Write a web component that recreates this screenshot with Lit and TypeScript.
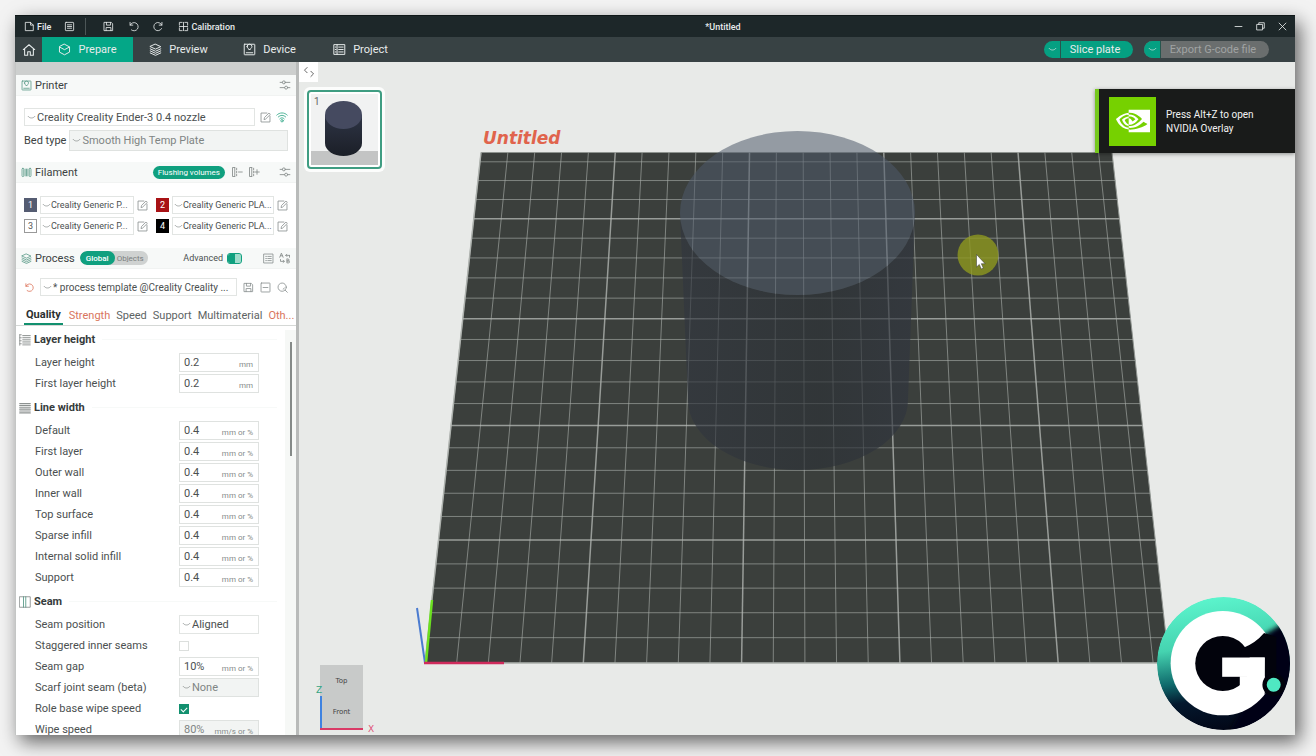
import { LitElement, html, css, svg, nothing } from "lit";
import { customElement } from "lit/decorators.js";
import { classMap } from "lit/directives/class-map.js";

const stroke = (size: number, body: unknown, box = 16) => html`<svg
  class="ico" width=${size} height=${size} viewBox="0 0 ${box} ${box}"
  fill="none" stroke="currentColor" stroke-width="1.2" stroke-linecap="round" stroke-linejoin="round" aria-hidden="true">${body}</svg>`;

const icons = {
  file: svg`<path d="M2.5 2h7l4 4v8h-11zM9.5 2v4h4"/>`,
  list: svg`<rect x="2" y="2" width="12" height="12" rx="1"/><path d="M5 5.500h6M5 8h6M5 10.500h6"/>`,
  save: svg`<path d="M2 2h10l2 2v10H2zM5 2v4h6V2M4.500 14V9.500h7V14"/>`,
  undo: svg`<path d="M3 2v4h4M3.200 6A6 6 0 1 1 5 13"/>`,
  redo: svg`<path d="M13 2v4H9M12.800 6A6 6 0 1 0 12.500 11"/>`,
  calib: svg`<path d="M6 2H2v4M10 2h4v4M6 14H2v-4M10 14h4v-4M2 8h12M8 2v12"/>`,
  home: svg`<path d="M1.500 7.500L8 2l6.500 5.500M3 6.500V14h3.500V10h3v4H13V6.500"/>`,
  cube: svg`<path d="M8 1.500l6.200 3.300v6.400L8 14.500l-6.200-3.300V4.800zM2 5l6 3.200L14 5"/>`,
  layers: svg`<path d="M8 1.500l6.500 3L8 7.500l-6.500-3zM1.500 7.200L8 10.200l6.500-3M1.500 9.700L8 12.700l6.500-3M1.500 12.200L8 15.200l6.500-3"/>`,
  printer: svg`<rect x="1.500" y="1.500" width="13" height="13" rx=".6"/><path d="M5 4.500a3 3 0 0 1 6 0c0 1.500-2 2-2 3.500H7c0-1.500-2-2-2-3.500zM4 12h8"/>`,
  project: svg`<rect x="1.500" y="2" width="13" height="12"/><path d="M5 2v12M7 5h5.500M7 8h5.500M7 11h5.500M2.800 5h1M2.800 8h1M2.800 11h1"/>`,
  sliders: svg`<path d="M1.500 4.500h3M8.500 4.500h6M1.500 11.500h6M11.500 11.500h3"/><circle cx="6.500" cy="4.500" r="2"/><circle cx="9.500" cy="11.500" r="2"/>`,
  edit: svg`<path d="M10 1.500H1.500v13h13V6M6 10.500l.6-2.600L13 1.500l2 2-6.400 6.400z"/>`,
  wifi: svg`<path d="M1 5.500C5 1.500 11 1.500 15 5.500M3 8c3-3 7-3 10 0M5 10.500c2-2 4-2 6 0"/><circle cx="8" cy="13" r="1.600"/>`,
  spool: svg`<rect x="1.500" y="2" width="2.500" height="12" rx="1.200"/><rect x="12" y="2" width="2.500" height="12" rx="1.200"/><path d="M6 3v10M8 3v10M10 3v10"/>`,
  spoolMinus: svg`<path d="M5 2H2v12h3M5 2v12M7.500 3v2M7.500 7v2M7.500 11v2M10 8h5"/>`,
  spoolPlus: svg`<path d="M5 2H2v12h3M5 2v12M7.500 3v2M7.500 7v2M7.500 11v2M9 8h6M12 5v6"/>`,
  lines: svg`<rect x="1.500" y="1.500" width="13" height="13"/><path d="M4 5h1M7 5h5M4 8h1M7 8h5M4 11h1M7 11h5"/>`,
  compare: svg`<path d="M1 7l2.200-5.500L5.500 7M2 5h2.600M9 4.500h5M10.500 3L9 4.500 10.500 6M14 4.500V7M2 10v2.500h5M5.500 11L7 12.500 5.500 14M10.500 9.500v5h2.200a1.300 1.300 0 0 0 0-2.600h-2.200 1.900a1.200 1.200 0 0 0 0-2.400z"/>`,
  minusBox: svg`<rect x="1.500" y="1.500" width="13" height="13" rx=".6"/><path d="M4.500 8h7"/>`,
  search: svg`<circle cx="7.500" cy="7.500" r="6"/><path d="M12 12l3 3M9 10.500a3.400 3.400 0 0 0 1.800-1.800"/>`,
  chevron: svg`<path d="M2 6c3 4 9 4 12 0"/>`,
  layerHeight: svg`<path d="M1 1v14M5 2h10M5 4.500h10M5 7h10M5 9.500h10M5 12h10M5 14.500h10M1 1h2M1 5h2M1 9h2M1 13h2"/>`,
  lineWidth: svg`<path d="M1 2h14M1 4.500h14M1 7h14M1 9.500h14M1 12h14M1 14.500h14" stroke-width="1.600"/>`,
  seam: svg`<rect x="1" y="1" width="14" height="14"/><path d="M6 1v14M9 1v14" stroke="#5d9c8b"/>`,
  collapse: svg`<path d="M5.500 2L2 5.500 5.500 9M10.500 7L14 10.500 10.500 14"/>`,
  min: svg`<path d="M3 8h10"/>`,
  max: svg`<path d="M3 5h8v8H3zM5.500 5V2.500h8v8H11"/>`,
  close: svg`<path d="M3 3l10 10M13 3L3 13"/>`,
};

type Kind = "value" | "select" | "check";
interface Option { label: string; kind: Kind; value?: string; unit?: string; disabled?: boolean; on?: boolean }
interface Group { title: string; icon: unknown; rows: Option[] }

const width = (label: string): Option => ({ label, kind: "value", value: "0.4", unit: "mm or %" });

const groups: Group[] = [
  {
    title: "Layer height", icon: icons.layerHeight,
    rows: [
      { label: "Layer height", kind: "value", value: "0.2", unit: "mm" },
      { label: "First layer height", kind: "value", value: "0.2", unit: "mm" },
    ],
  },
  {
    title: "Line width", icon: icons.lineWidth,
    rows: ["Default", "First layer", "Outer wall", "Inner wall", "Top surface", "Sparse infill", "Internal solid infill", "Support"].map(width),
  },
  {
    title: "Seam", icon: icons.seam,
    rows: [
      { label: "Seam position", kind: "select", value: "Aligned" },
      { label: "Staggered inner seams", kind: "check" },
      { label: "Seam gap", kind: "value", value: "10%", unit: "mm or %" },
      { label: "Scarf joint seam (beta)", kind: "select", value: "None", disabled: true },
      { label: "Role base wipe speed", kind: "check", on: true },
      { label: "Wipe speed", kind: "value", value: "80%", unit: "mm/s or %", disabled: true },
    ],
  },
];

const filaments = [
  { id: 1, name: "Creality Generic P...", tone: "slate" },
  { id: 2, name: "Creality Generic PLA...", tone: "red" },
  { id: 3, name: "Creality Generic P...", tone: "white" },
  { id: 4, name: "Creality Generic PLA...", tone: "black" },
];

const combo = (value: string, label: string, cls = "", id = "") => html`
  <span class="combo ${cls}">
    ${stroke(9, icons.chevron)}
    <select id=${id || nothing} aria-label=${label} ?disabled=${cls.includes("off")}><option>${value}</option></select>
  </span>`;

const base = css`
  :host { font-family: Roboto, "Noto Sans", sans-serif; font-size: 11px; color: #4b5050; }
  * { box-sizing: border-box; }
  button, input, select { font: inherit; color: inherit; margin: 0; padding: 0; border: 0; background: none; }
  button { display: inline-flex; align-items: center; justify-content: center; white-space: nowrap; }
  .ico { display: block; flex: none; }
`;

@customElement("slicer-topbar")
export class SlicerTopbar extends LitElement {
  static styles = [base, css`
    :host { display: block; color: #e8ecec; }
    .title { height: 22px; background: #1d2729; display: grid; grid-template-columns: 1fr auto 1fr; align-items: center; font-size: 9px; border-top: 1px solid #0f1718; }
    .menu { display: flex; align-items: center; padding-left: 9px; font-weight: 500; }
    .menu button { gap: 2px; height: 20px; }
    .sep { width: 1px; height: 17px; background: #4c5657; margin: 0 17px 0 10px; }
    .gap { margin-left: 14px; }
    .menu .near { margin-left: 13px; }
    .title .name { font-weight: 500; padding-left: 136px; }
    .win { display: flex; justify-content: flex-end; gap: 11px; padding-right: 7px; }
    .tabs { height: 25px; background: #384244; display: flex; align-items: stretch; }
    .home { width: 27px; }
    .tab { gap: 7px; width: 91px; }
    .tab.on { background: #04a787; }
    .grow { flex: 1; }
    .pill { display: flex; align-self: center; height: 17px; margin-right: 11px; border-radius: 9px; overflow: hidden; background: #05a082; }
    .pill .drop { width: 17px; border-right: 1px solid #27564e; }
    .pill .act { width: 72px; padding-right: 4px; }
    .pill.off { margin-right: 26px; background: #6a6e6e; }
    .pill.off .drop { background: #05a082; }
    .pill.off .act { width: 108px; color: #a0a3a3; }
  `];
  render() {
    return html`
      <div class="title">
        <div class="menu">
          <button>${stroke(11, icons.file)}File</button>
          <button class="near" aria-label="Menu">${stroke(11, icons.list)}</button>
          <span class="sep"></span>
          <button aria-label="Save">${stroke(11, icons.save)}</button>
          <button class="gap" aria-label="Undo">${stroke(11, icons.undo)}</button>
          <button class="gap" aria-label="Redo">${stroke(11, icons.redo)}</button>
          <button class="gap">${stroke(11, icons.calib)}Calibration</button>
        </div>
        <span class="name">*Untitled</span>
        <div class="win">
          <button aria-label="Minimize">${stroke(11, icons.min)}</button>
          <button aria-label="Restore">${stroke(11, icons.max)}</button>
          <button aria-label="Close">${stroke(11, icons.close)}</button>
        </div>
      </div>
      <nav class="tabs">
        <button class="home" aria-label="Home">${stroke(14, icons.home)}</button>
        <button class="tab on">${stroke(13, icons.cube)}Prepare</button>
        <button class="tab">${stroke(13, icons.layers)}Preview</button>
        <button class="tab">${stroke(13, icons.printer)}Device</button>
        <button class="tab">${stroke(13, icons.project)}Project</button>
        <span class="grow"></span>
        <span class="pill"><button class="drop" aria-label="Slice options">${stroke(9, icons.chevron)}</button><button class="act">Slice plate</button></span>
        <span class="pill off"><button class="drop" aria-label="Export options">${stroke(9, icons.chevron)}</button><button class="act" disabled>Export G-code file</button></span>
      </nav>`;
  }
}

@customElement("slicer-sidebar")
export class SlicerSidebar extends LitElement {
  static styles = [base, css`
    :host { display: flex; flex-direction: column; background: #fff; overflow: hidden; border-left: 1px solid #c4c6c5; }
    .strip { flex: none; height: 13px; background: #cdcfce; }
    .head { flex: none; height: 21px; background: #f7f9f8; display: flex; align-items: center; padding: 0 5px; border-bottom: 1px solid #f1f3f2; }
    .head h2 { margin: 0 0 0 3px; font-size: 11px; font-weight: 400; color: #3c4242; }
    .head .ico, .tool { color: #8b9190; }
    .head .lead .ico { color: #5d9c8b; }
    .grow { flex: 1; }
    .block { display: flex; flex-direction: column; flex: none; }
    .line { display: flex; align-items: center; min-width: 0; }
    .combo { display: flex; align-items: center; min-width: 0; height: 18px; border: 1px solid #e2e5e3; padding-left: 2px; gap: 1px; background: #fff; }
    .combo .ico { color: #7d8382; }
    .combo select { appearance: none; flex: 1; width: 20px; min-width: 0; height: 100%; opacity: 1; overflow: hidden; }
    .combo.off { background: #f2f4f3; color: #7f8584; border-color: #dfe2e0; }
    .grow.combo { flex: 1; }
    .printer { padding: 12px 8px 11px; gap: 4px; }
    .printer .line { gap: 5px; }
    .printer .bed { gap: 3px; }
    .bed .combo { height: 21px; }
    .bed label { color: #3c4242; }
    .wifi { color: #3fae90; }
    .fils { padding: 13px 8px; display: grid; grid-template-columns: 124px minmax(0, 1fr); gap: 3px 8px; }
    .fils .line { gap: 3px; font-size: 9px; }
    .fils .combo { flex: 1; gap: 0; padding-left: 1px; }
    .chip { width: 13px; height: 14px; font-size: 9px; line-height: 12px; text-align: center; color: #fff; border: 1px solid transparent; flex: none; }
    .chip.slate { background: #555c72; }
    .chip.red { background: #a81215; }
    .chip.white { background: #fff; color: #555; border-color: #999; }
    .chip.black { background: #000; }
    .flush { height: 13px; padding: 0 5px; border-radius: 7px; background: #10a07f; color: #fff; font-size: 8px; }
    .head button + button { margin-left: 5px; }
    .head .flush + button { margin-left: 6px; }
    .head .far.far { margin-left: 19px; }
    .seg { display: flex; margin-left: 5px; height: 14px; border-radius: 7px; background: #cfd2d1; font-size: 8px; overflow: hidden; }
    .seg button { padding: 0 4px 0 2px; color: #7a807f; }
    .seg .on { background: #10a07f; color: #fff; font-weight: 500; border-radius: 7px; padding: 0 6px; }
    .head .seg button + button { margin-left: 0; }
    .adv { display: flex; align-items: center; gap: 4px; font-size: 9px; margin-right: 21px; }
    .switch { appearance: none; width: 15px; height: 11px; border-radius: 3px; background: linear-gradient(90deg, #10a07f 7px, #9fdccb 7px) content-box; border: 1px solid #10a07f; }
    .proc { padding: 9px 8px 8px; }
    .proc .line { gap: 6px; }
    .proc .combo { flex: 1; font-size: 10px; }
    .undo { color: #d9694f; }
    .undo .ico { width: 10px; }
    .tabs { flex: none; display: flex; align-items: stretch; height: 22px; border-bottom: 1px solid #d5d8d6; padding-left: 8px; gap: 6px; color: #5d6363; }
    .tabs button { padding: 2px 0 0; }
    .tabs .on { color: #2b3030; font-weight: 700; border-bottom: 2px solid #12906f; padding: 2px 2px 0; }
    .tabs .warn { color: #d9755d; }
    .scroll { flex: 1; min-height: 0; display: flex; overflow: hidden; }
    .list { flex: 1; display: flex; flex-direction: column; gap: 1px; padding-top: 1px; min-width: 0; }
    .bar { width: 11px; background: #f6f8f6; margin-top: 4px; padding: 12px 0 0 5px; }
    .thumb { width: 2px; height: 114px; background: #858a88; }
    fieldset { border: 0; margin: 0; padding: 0; flex: none; min-width: 0; }
    .cap { height: 25px; display: flex; align-items: center; gap: 3px; padding-left: 3px; color: #8d9291; }
    .cap h3 { margin: 0; font-size: 11px; font-weight: 700; color: #363b3b; }
    .cap::after { content: ""; flex: 1; height: 1px; background: #f7f9f8; margin: 0 8px 0 4px; }
    .row { height: 21px; display: grid; grid-template-columns: 144px 80px; align-items: center; padding-left: 19px; }
    .field { display: flex; align-items: center; height: 19px; border: 1px solid #dfe2e0; padding: 0 5px 0 4px; background: #fff; }
    .field input { flex: 1; width: 20px; min-width: 0; }
    .field span { font-size: 8px; color: #858b8a; padding-top: 3px; }
    .field.off { background: #f2f4f3; color: #7f8584; }
    .row .combo { height: 19px; }
    .check { appearance: none; width: 10px; height: 10px; border: 1px solid #dcdfdd; display: grid; }
    .check:checked { background: #12906f; border-color: #12906f; }
    .check:checked::after { content: ""; width: 5px; height: 3px; border: solid #fff; border-width: 0 0 1px 1px; transform: rotate(-45deg); place-self: center; }
  `];

  private control(o: Option, id: string) {
    if (o.kind === "select") return combo(o.value ?? "", o.label, o.disabled ? "off" : "", id);
    if (o.kind === "check") return html`<input class="check" type="checkbox" id=${id} .checked=${!!o.on} />`;
    return html`<span class=${classMap({ field: true, off: !!o.disabled })}>
      <input id=${id} .value=${o.value ?? ""} ?disabled=${o.disabled} /><span>${o.unit}</span></span>`;
  }

  render() {
    return html`
      <div class="strip"></div>
      <div class="head"><span class="lead">${stroke(11, icons.printer)}</span><h2>Printer</h2><span class="grow"></span>
        <button aria-label="Printer settings">${stroke(12, icons.sliders)}</button></div>
      <div class="block printer">
        <div class="line">${combo("Creality Creality Ender-3 0.4 nozzle", "Printer preset", "grow")}
          <button class="tool" aria-label="Edit printer">${stroke(11, icons.edit)}</button>
          <button class="wifi" aria-label="Connection">${stroke(12, icons.wifi)}</button></div>
        <div class="line bed"><label for="bed">Bed type</label>${combo("Smooth High Temp Plate", "Bed type", "off grow", "bed")}</div>
      </div>
      <div class="head"><span class="lead">${stroke(11, icons.spool)}</span><h2>Filament</h2><span class="grow"></span>
        <button class="flush">Flushing volumes</button>
        <button aria-label="Remove filament">${stroke(12, icons.spoolMinus)}</button>
        <button aria-label="Add filament">${stroke(12, icons.spoolPlus)}</button>
        <button class="far" aria-label="Filament settings">${stroke(12, icons.sliders)}</button></div>
      <div class="block fils">
        ${filaments.map((f) => html`<div class="line"><span class="chip ${f.tone}">${f.id}</span>
          ${combo(f.name, `Filament ${f.id}`)}<button class="tool" aria-label="Edit filament">${stroke(11, icons.edit)}</button></div>`)}
      </div>
      <div class="head"><span class="lead">${stroke(11, icons.layers)}</span><h2>Process</h2>
        <span class="seg"><button class="on">Global</button><button>Objects</button></span><span class="grow"></span>
        <label class="adv">Advanced<input class="switch" type="checkbox" checked /></label>
        <button aria-label="Parameter list">${stroke(11, icons.lines)}</button>
        <button aria-label="Compare presets">${stroke(12, icons.compare)}</button></div>
      <div class="block proc"><div class="line">
        <button class="undo" aria-label="Reset">${stroke(11, icons.undo)}</button>
        ${combo("* process template @Creality Creality ...", "Process preset")}
        <button class="tool" aria-label="Save preset">${stroke(11, icons.save)}</button>
        <button class="tool" aria-label="Delete preset">${stroke(11, icons.minusBox)}</button>
        <button class="tool" aria-label="Search">${stroke(11, icons.search)}</button></div></div>
      <nav class="tabs"><button class="on">Quality</button><button class="warn">Strength</button><button>Speed</button><button>Support</button><button>Multimaterial</button><button class="warn">Oth...</button></nav>
      <div class="scroll">
        <div class="list">
          ${groups.map((g, gi) => html`<fieldset aria-label=${g.title}>
            <div class="cap">${stroke(12, g.icon)}<h3>${g.title}</h3></div>
            ${g.rows.map((o, i) => html`<div class="row"><label for="o${gi}-${i}">${o.label}</label>${this.control(o, `o${gi}-${i}`)}</div>`)}
          </fieldset>`)}
        </div>
        <div class="bar"><div class="thumb"></div></div>
      </div>`;
  }
}

/* Build plate in perspective: 23.5 cells per side, rows shrink with distance. */
const CELLS = 23.5;
const rowY = (k: number) => 663 - (25.51 * k) / (1 + 0.00742 * k);
const farY = rowY(CELLS);
const edge = (y: number) => {
  const t = (663 - y) / (663 - farY);
  return { left: 425 + 56 * t, right: 1169 - 57 * t };
};
const steps = Array.from({ length: 24 }, (_, k) => k);

@customElement("slicer-scene")
export class SlicerScene extends LitElement {
  static styles = [base, css`
    :host { display: block; position: relative; overflow: hidden; background: #e8eae8; }
    .scene { position: absolute; inset: 0; width: 100%; height: 100%; }
    .thin { stroke: #a9aeaa; stroke-width: 1; opacity: .62; }
    .bold { stroke: #b8bcb8; stroke-width: 1.5; opacity: .75; }
    .plate-name { font: italic 700 17px "DejaVu Sans", sans-serif; fill: #e0644c; }
    .fold { position: absolute; left: 0; top: 0; width: 19px; height: 20px; background: #fff; color: #555; }
    .thumb { position: absolute; left: 5px; top: 25px; padding: 3px; background: #fcfdfc; border-radius: 6px; }
    .thumb button { display: block; position: relative; width: 75px; height: 79px; border: 2px solid #3f9d82; border-radius: 4px; background: #fff; }
    .thumb svg { display: block; margin: 2px; }
    .thumb span { position: absolute; left: 5px; top: 4px; font-size: 10px; color: #666; }
    .cube { position: absolute; left: 21px; bottom: 5px; width: 43px; height: 65px; display: grid; grid-template-rows: 1fr 1fr; background: #c8cac9; font: 7px "DejaVu Sans", sans-serif; color: #444; border-bottom: 2px solid #d93a66; }
    .cube::before { content: ""; position: absolute; left: 0; bottom: 0; width: 2px; height: 32px; background: #3f82e0; }
    .z, .x { position: absolute; font: 9px "DejaVu Sans", sans-serif; }
    .z { left: -4px; top: 20px; color: #35a583; }
    .x { left: 48px; bottom: -6px; color: #e05578; }
    .toast { position: absolute; top: 27px; right: 0; width: 200px; height: 64px; display: flex; align-items: center; gap: 10px; padding-left: 10px; background: #191b1a; border-left: 4px solid #76c81e; color: #f2f2f2; font-size: 10px; line-height: 14px; box-shadow: 0 1px 4px rgba(0,0,0,.4); }
    .nv { width: 47px; height: 49px; background: #76d100; display: grid; place-items: center; }
    .toast p { margin: 0; padding-top: 1px; white-space: nowrap; }
    .logo { position: absolute; right: 5px; bottom: 5px; }
  `];

  render() {
    return html`
      <svg class="scene" viewBox="299 62 996 673" preserveAspectRatio="xMidYMid slice" role="img" aria-label="Build plate">
        <defs>
          <linearGradient id="body" x1="0" x2="1"><stop offset="0" stop-color="#31363f"/><stop offset=".6" stop-color="#2c3136"/><stop offset="1" stop-color="#30353f"/></linearGradient>
        </defs>
        <path d="M425 663L481 ${farY}H1112L1169 663z" fill="#3b3f3c" stroke="#8f9490"/>
        ${steps.map((k) => {
          const cls = k % 5 === 0 ? "bold" : "thin";
          const y = rowY(k);
          const e = edge(y);
          return svg`<line class=${cls} x1=${e.left} x2=${e.right} y1=${y} y2=${y}/>
            <line class=${cls} x1=${425 + (744 * k) / CELLS} y1="663" x2=${481 + (631 * k) / CELLS} y2=${farY}/>`;
        })}
        <path d="M680 213L688 400A110 70 0 0 0 908 400L915 213A117.500 82 0 0 1 680 213z" fill="url(#body)" opacity=".66"/>
        <ellipse cx="797.500" cy="213" rx="117.500" ry="82" fill="#4f5a6a" opacity=".55"/>
        <path d="M425 663L417 608" stroke="#4a7bd0" stroke-width="2"/>
        <path d="M426 663L432 600" stroke="#6be020" stroke-width="2.500"/>
        <path d="M424 663H504" stroke="#cf2b5c" stroke-width="2.500"/>
        <text class="plate-name" x="483" y="144">Untitled</text>
        <circle cx="978" cy="255" r="20.500" fill="#8f9a1e" opacity=".78"/>
        <path d="M976.500 254.500v12.500l2.800-2.600 2 4.600 2-.9-2-4.400h3.800z" fill="#fff" stroke="#333" stroke-width=".5"/>
      </svg>
      <button class="fold" aria-label="Collapse sidebar">${stroke(12, icons.collapse)}</button>
      <div class="thumb"><button aria-label="Plate 1">
        <svg width="67" height="71" viewBox="0 0 67 71">
          <defs><linearGradient id="tb" x2="0" y2="1"><stop offset="0" stop-color="#2e3445"/><stop offset="1" stop-color="#1b1f27"/></linearGradient></defs>
          <path fill="#f1f2f2" d="M0 0h67v71H0z"/><path fill="#c3c4c4" d="M0 57h67v14H0z"/>
          <path d="M14 21v28a18.500 13 0 0 0 37 0V21z" fill="url(#tb)"/><ellipse cx="32.500" cy="21" rx="18.500" ry="14" fill="#454a60"/>
        </svg><span>1</span></button></div>
      <div class="cube"><button>Top</button><button>Front</button><span class="z">Z</span><span class="x">X</span></div>
      <div class="toast" role="status">
        <span class="nv"><svg width="34" height="34" viewBox="0 0 24 24" fill="#fff" aria-hidden="true"><path d="M8.948 8.798v-1.430a6.700 6.700 0 0 1 .424-.018c3.922-.124 6.493 3.374 6.493 3.374s-2.774 3.851-5.750 3.851c-.398 0-.787-.062-1.158-.185v-4.346c1.528.185 1.837.857 2.747 2.385l2.040-1.714s-1.492-1.952-4-1.952a6.016 6.016 0 0 0-.796.035m0-4.735v2.138l.424-.027c5.450-.185 9.010 4.470 9.010 4.470s-4.080 4.964-8.330 4.964c-.370 0-.733-.035-1.095-.097v1.325c.300.035.610.062.910.062 3.957 0 6.820-2.023 9.593-4.408.459.371 2.340 1.263 2.730 1.652-2.633 2.208-8.772 3.984-12.253 3.984-.335 0-.653-.018-.971-.053v1.864H24V4.063zm0 10.326v1.131c-3.657-.654-4.673-4.460-4.673-4.460s1.758-1.944 4.673-2.262v1.237H8.940c-1.528-.186-2.730 1.245-2.730 1.245s.680 2.412 2.739 3.110M2.456 10.900s2.164-3.197 6.500-3.533V6.201C4.153 6.590 0 10.653 0 10.653s2.350 6.802 8.948 7.420v-1.237c-4.840-.600-6.492-5.936-6.492-5.936z"/></svg></span>
        <p>Press Alt+Z to open<br />NVIDIA Overlay</p>
      </div>
      <svg class="logo" width="133" height="133" viewBox="81 50 400 400" role="img" aria-label="Channel logo">
        <defs><linearGradient id="ring" x1=".4" y1="0" x2=".55" y2="1"><stop offset="0" stop-color="#5cf5cd"/><stop offset=".35" stop-color="#45d3b0"/><stop offset=".6" stop-color="#0f6a6c"/><stop offset=".75" stop-color="#04182e"/><stop offset="1" stop-color="#020616"/></linearGradient>
        <filter id="soft"><feGaussianBlur stdDeviation="8"/></filter>
        <clipPath id="disc"><circle cx="281" cy="250" r="200"/></clipPath></defs>
        <g clip-path="url(#disc)">
          <circle cx="281" cy="250" r="200" fill="url(#ring)"/>
          <path d="M390 172L455 132L520 130V460H300L330 400z" fill="#020512" filter="url(#soft)"/>
          <circle cx="279" cy="249" r="157" fill="#fff"/>
          <circle cx="279" cy="250" r="83" fill="#02030c"/>
          <path d="M338 204Q378 188 403 158L440 170V340H403L405 232H330z" fill="#02030c"/>
          <rect x="277" y="232" width="128" height="58" fill="#fff"/>
          <rect x="330" y="288" width="75" height="52" fill="#fff"/>
          <circle cx="432" cy="314" r="34" fill="#02030c"/>
          <circle cx="432" cy="314" r="21" fill="#4fe8c2"/>
        </g>
      </svg>`;
  }
}

@customElement("app-root")
export class AppRoot extends LitElement {
  static styles = css`
    :host { display: block; box-sizing: border-box; height: 100vh; padding: 15px 21px 21px 15px; background: #f3f3f3; overflow: hidden; }
    .window { height: 100%; display: flex; flex-direction: column; box-shadow: 5px 7px 18px rgba(0, 0, 0, .6); }
    .body { flex: 1; min-height: 0; display: grid; grid-template-columns: 281px minmax(0, 1fr); gap: 3px; background: #b9bbba; }
  `;
  render() {
    return html`<div class="window">
      <slicer-topbar></slicer-topbar>
      <div class="body"><slicer-sidebar></slicer-sidebar><slicer-scene></slicer-scene></div>
    </div>`;
  }
}
